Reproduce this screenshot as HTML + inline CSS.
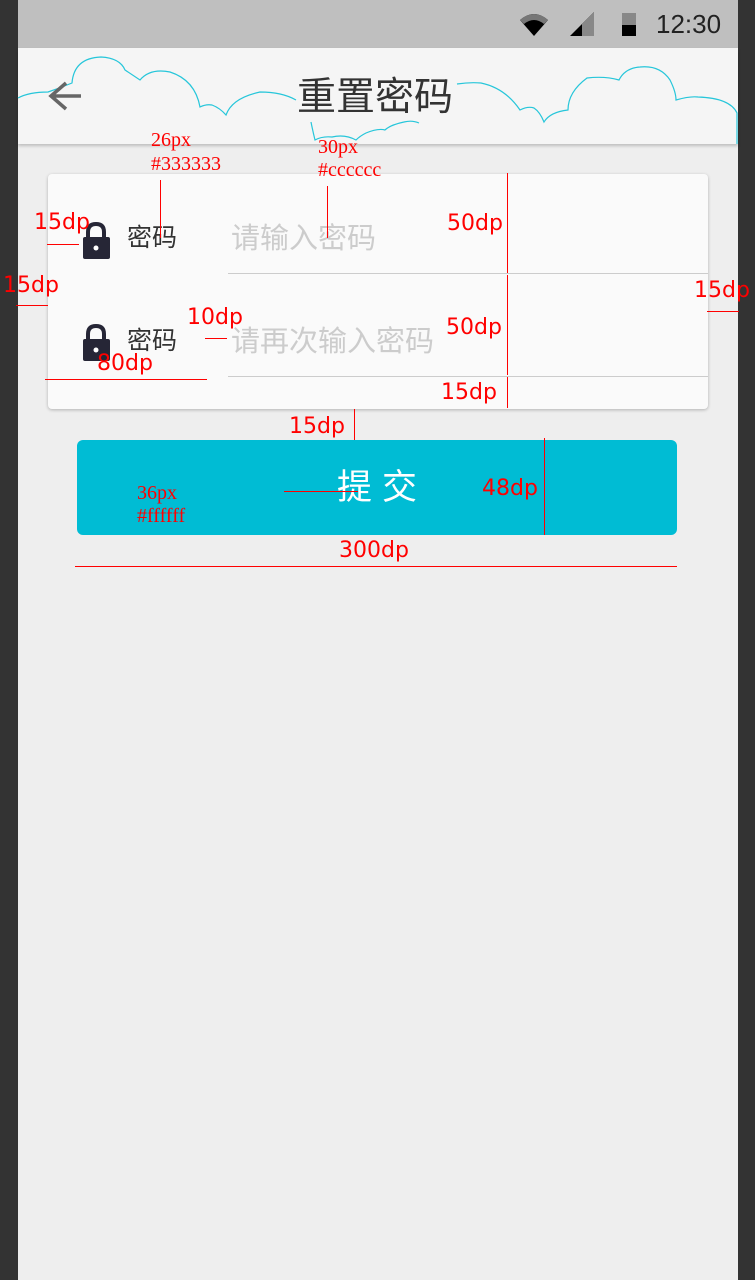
<!DOCTYPE html>
<html><head><meta charset="utf-8"><style>
*{margin:0;padding:0;box-sizing:border-box}
body{width:755px;height:1280px;background:#333;position:relative;overflow:hidden;font-family:"Liberation Sans","Noto Sans CJK SC",sans-serif}
.a{position:absolute}
.r{color:#f00;font-size:22px;line-height:1;font-family:"DejaVu Sans","Noto Sans CJK SC",sans-serif}
.s{color:#f00;font-size:20px;line-height:1;font-family:"Liberation Serif",serif}
.hl{position:absolute;height:1px;background:#f00}
.vl{position:absolute;width:1px;background:#f00}
</style></head><body>
<div class="a" style="left:18px;top:0;width:720px;height:1280px;background:#eee"></div>
<div class="a" style="left:18px;top:0;width:720px;height:48px;background:#bfbfbf"></div>
<svg class="a" style="left:518px;top:10px" width="125" height="28">
<path d="M2 10 Q16 -2 30 10 L16 26 Z" fill="#000"/>
<path d="M2 10 Q16 -2 30 10 L26 14 Q16 6 6 14 Z" fill="#777"/>
<path d="M52 26 L76 2 L76 26 Z" fill="#000"/>
<path d="M64 14 L76 2 L76 26 L64 26 Z" fill="#888"/>
<rect x="104" y="3" width="14" height="23" fill="#000"/>
<rect x="104" y="3" width="14" height="12" fill="#888"/>
</svg>
<div class="a" style="left:656px;top:9px;font-size:26px;color:#222">12:30</div>
<div class="a" style="left:18px;top:48px;width:720px;height:96px;background:#f5f5f5;box-shadow:0 2px 3px rgba(0,0,0,.2)"></div>
<svg class="a" style="left:0;top:0" width="755" height="146" fill="none" stroke="#26c6da" stroke-width="1.2">
<path d="M18 98 Q29 92 48 92 Q60 88 72 83 Q74 58 101 57 Q120 58 125 70 L140 80 Q150 68 170 72 Q195 80 200 107 Q206 104 212 105 Q220 108 226 115 Q232 98 260 92 Q282 92 296 100"/>
<path d="M311 122 Q313 132 315 140 Q322 136 332 137 Q345 134 356 140 Q360 136 366 133 Q378 128 385 130 Q390 125 404 122 Q412 120 419 123"/>
<path d="M457 84 Q470 82 481 83 Q505 88 520 110 Q528 106 534 108 Q540 112 544 122 Q550 112 568 110 Q568 92 587 78 Q605 76 619 80 Q625 68 640 67 Q660 65 670 80 Q676 92 676 100 Q690 96 698 97 Q730 98 737 113 L737 144"/>
</svg>
<svg class="a" style="left:46px;top:80px" width="36" height="32"><path d="M20 3 L5 16 L20 29 M5 16 L35 16" stroke="#666" stroke-width="3.5" fill="none"/></svg>
<div class="a" style="left:297px;top:78px;font-size:39px;color:#333;line-height:1">重置密码</div>
<div class="a" style="left:48px;top:174px;width:660px;height:235px;background:#fafafa;border-radius:4px;box-shadow:0 1px 3px rgba(0,0,0,.25)"></div>
<div class="a" style="left:228px;top:273px;width:480px;height:1px;background:#ccc"></div>
<div class="a" style="left:228px;top:376px;width:480px;height:1px;background:#ccc"></div>
<svg class="a" style="left:82px;top:222px" width="30" height="38"><path d="M6 16 V10 Q6 2 14 2 Q22 2 22 10 V16" stroke="#262636" stroke-width="4" fill="none"/><rect x="1" y="15" width="27" height="22" rx="2" fill="#262636"/><circle cx="14" cy="26" r="2.5" fill="#fff"/></svg>
<svg class="a" style="left:82px;top:324px" width="30" height="38"><path d="M6 16 V10 Q6 2 14 2 Q22 2 22 10 V16" stroke="#262636" stroke-width="4" fill="none"/><rect x="1" y="15" width="27" height="22" rx="2" fill="#262636"/><circle cx="14" cy="26" r="2.5" fill="#fff"/></svg>
<div class="a" style="left:127px;top:226px;font-size:25px;color:#333;line-height:1">密码</div>
<div class="a" style="left:127px;top:329px;font-size:25px;color:#333;line-height:1">密码</div>
<div class="a" style="left:231px;top:225px;font-size:29px;color:#ccc;line-height:1">请输入密码</div>
<div class="a" style="left:231px;top:328px;font-size:29px;color:#ccc;line-height:1">请再次输入密码</div>
<div class="a" style="left:77px;top:440px;width:600px;height:95px;background:#00bcd4;border-radius:6px"></div>
<div class="a" style="left:337px;top:470px;font-size:35px;color:#fff;line-height:1;letter-spacing:10px">提交</div>
<!-- annotations -->
<div class="a s" style="left:151px;top:130px">26px</div>
<div class="a s" style="left:151px;top:154px">#333333</div>
<div class="vl" style="left:160px;top:180px;height:58px"></div>
<div class="a s" style="left:318px;top:137px">30px</div>
<div class="a s" style="left:318px;top:160px">#cccccc</div>
<div class="vl" style="left:327px;top:186px;height:52px"></div>
<div class="a r" style="left:34px;top:212px">15dp</div>
<div class="hl" style="left:47px;top:244px;width:32px"></div>
<div class="a r" style="left:3px;top:275px">15dp</div>
<div class="hl" style="left:16px;top:305px;width:32px"></div>
<div class="a r" style="left:187px;top:307px">10dp</div>
<div class="hl" style="left:205px;top:338px;width:22px"></div>
<div class="a r" style="left:97px;top:353px">80dp</div>
<div class="hl" style="left:45px;top:379px;width:162px"></div>
<div class="a r" style="left:447px;top:213px">50dp</div>
<div class="vl" style="left:507px;top:173px;height:100px"></div>
<div class="a r" style="left:446px;top:317px">50dp</div>
<div class="vl" style="left:507px;top:275px;height:100px"></div>
<div class="a r" style="left:441px;top:382px">15dp</div>
<div class="vl" style="left:507px;top:377px;height:31px"></div>
<div class="a r" style="left:694px;top:280px">15dp</div>
<div class="hl" style="left:707px;top:311px;width:32px"></div>
<div class="a r" style="left:289px;top:416px">15dp</div>
<div class="vl" style="left:354px;top:409px;height:31px"></div>
<div class="a r" style="left:482px;top:478px">48dp</div>
<div class="vl" style="left:544px;top:438px;height:97px"></div>
<div class="a s" style="left:137px;top:483px">36px</div>
<div class="a s" style="left:137px;top:506px">#ffffff</div>
<div class="hl" style="left:284px;top:491px;width:74px"></div>
<div class="a r" style="left:339px;top:540px">300dp</div>
<div class="hl" style="left:75px;top:566px;width:602px"></div>
</body></html>
